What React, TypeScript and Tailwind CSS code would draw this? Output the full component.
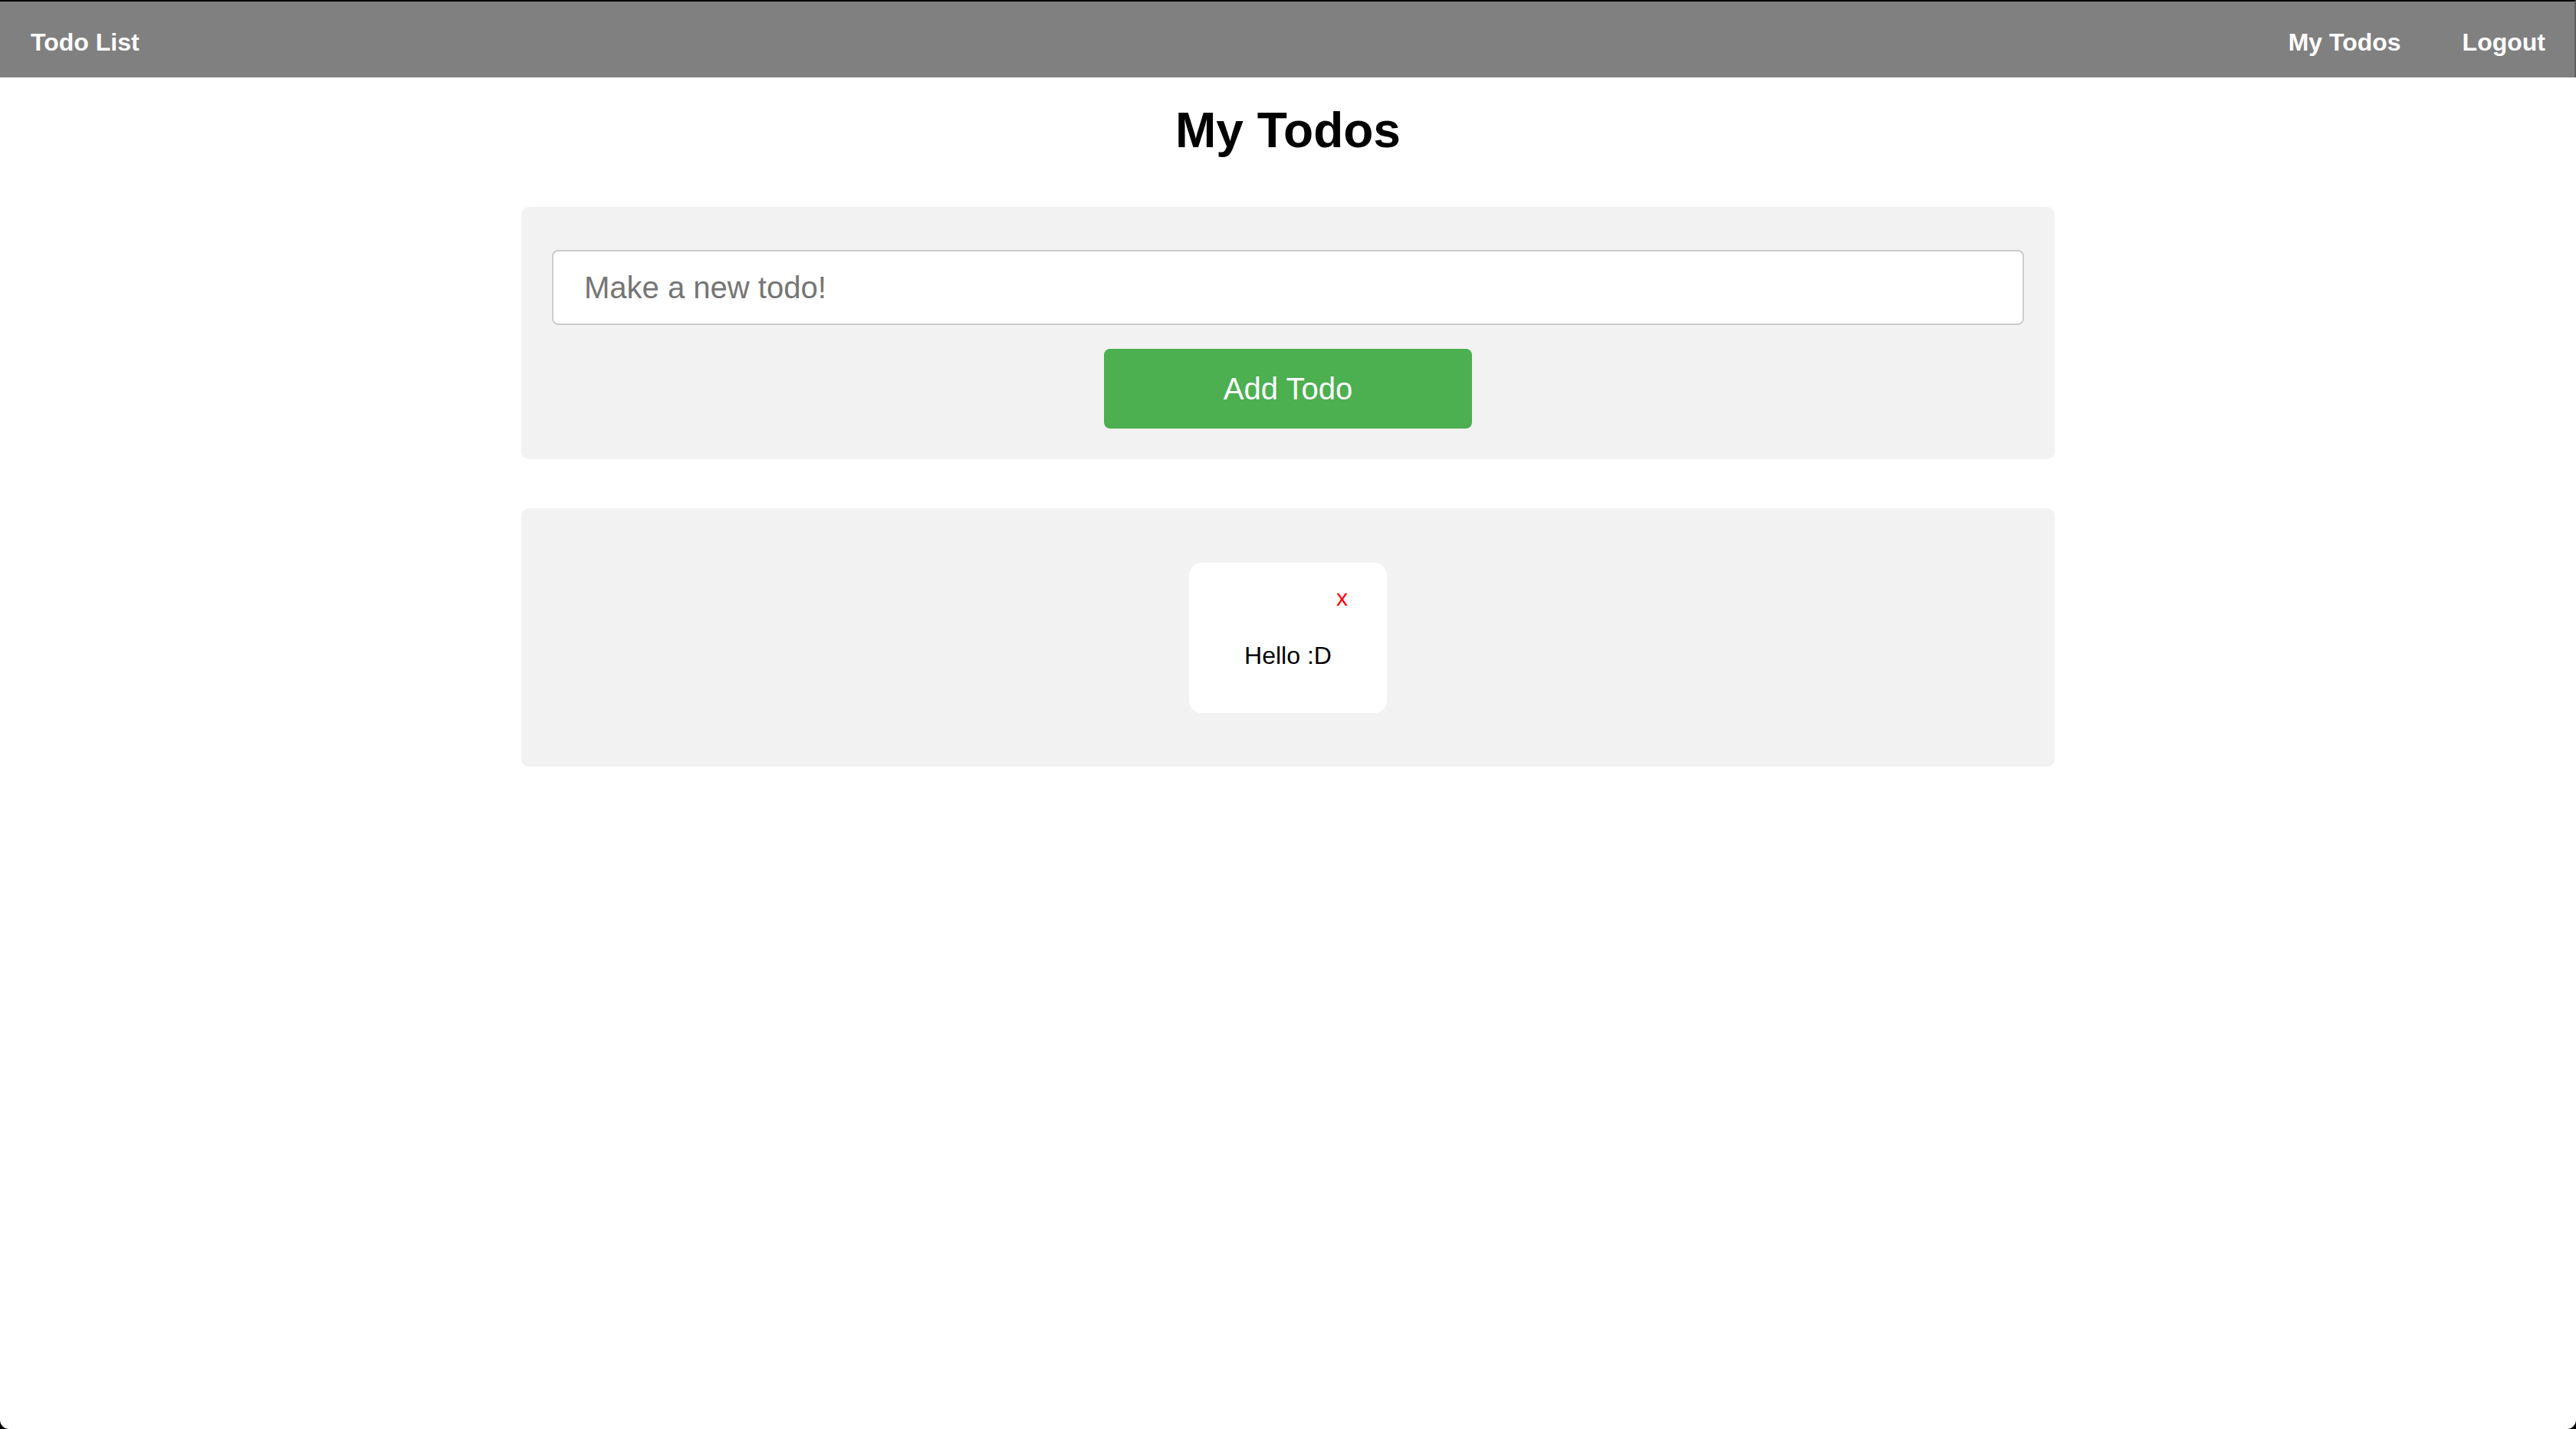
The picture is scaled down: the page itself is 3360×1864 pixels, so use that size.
import React from "react";

export default function App() {
  return (
    <div className="min-h-[1864px] w-full bg-black" style={{ fontFamily: '"Liberation Sans", Arial, sans-serif' }}>
      <div className="min-h-[1864px] w-full bg-white rounded-b-[12px] overflow-hidden flex flex-col">
        <nav className="h-[101px] border-t-2 border-black bg-[#808080] border-r-2 border-r-[#606060] flex items-center justify-between pl-[40px] pr-[38px] pt-[6px] text-white font-bold text-[32px]">
          <div>Todo List</div>
          <div className="flex items-center gap-[80px]">
            <span>My Todos</span>
            <span>Logout</span>
          </div>
        </nav>

        <h1 className="mt-[33px] text-center text-[64px] leading-[72px] font-bold text-black">My Todos</h1>

        <div className="mx-auto mt-[64px] w-[2000px] rounded-[10px] bg-[#f2f2f2] px-[40px] pt-[56px] pb-[40px] flex flex-col items-center">
          <div className="w-full h-[98px] rounded-[8px] border-2 border-[#cccccc] bg-white flex items-center pl-[40px]">
            <span className="text-[40px] text-[#757575]">Make a new todo!</span>
          </div>
          <button className="mt-[31px] w-[480px] h-[104px] rounded-[8px] bg-[#4caf50] text-white text-[40px] flex items-center justify-center">
            Add Todo
          </button>
        </div>

        <div className="mx-auto mt-[64px] w-[2000px] h-[337px] rounded-[10px] bg-[#f2f2f2] flex items-center justify-center">
          <div className="w-[258px] h-[196px] rounded-[16px] bg-white flex flex-col pt-[29px]">
            <div className="flex justify-end pr-[51px] h-[34px]">
              <span className="text-[30px] leading-[34px] text-[#ff0000]">x</span>
            </div>
            <div className="mt-[40px] text-center text-[32px] leading-[37px] text-black">Hello :D</div>
          </div>
        </div>
      </div>
    </div>
  );
}
